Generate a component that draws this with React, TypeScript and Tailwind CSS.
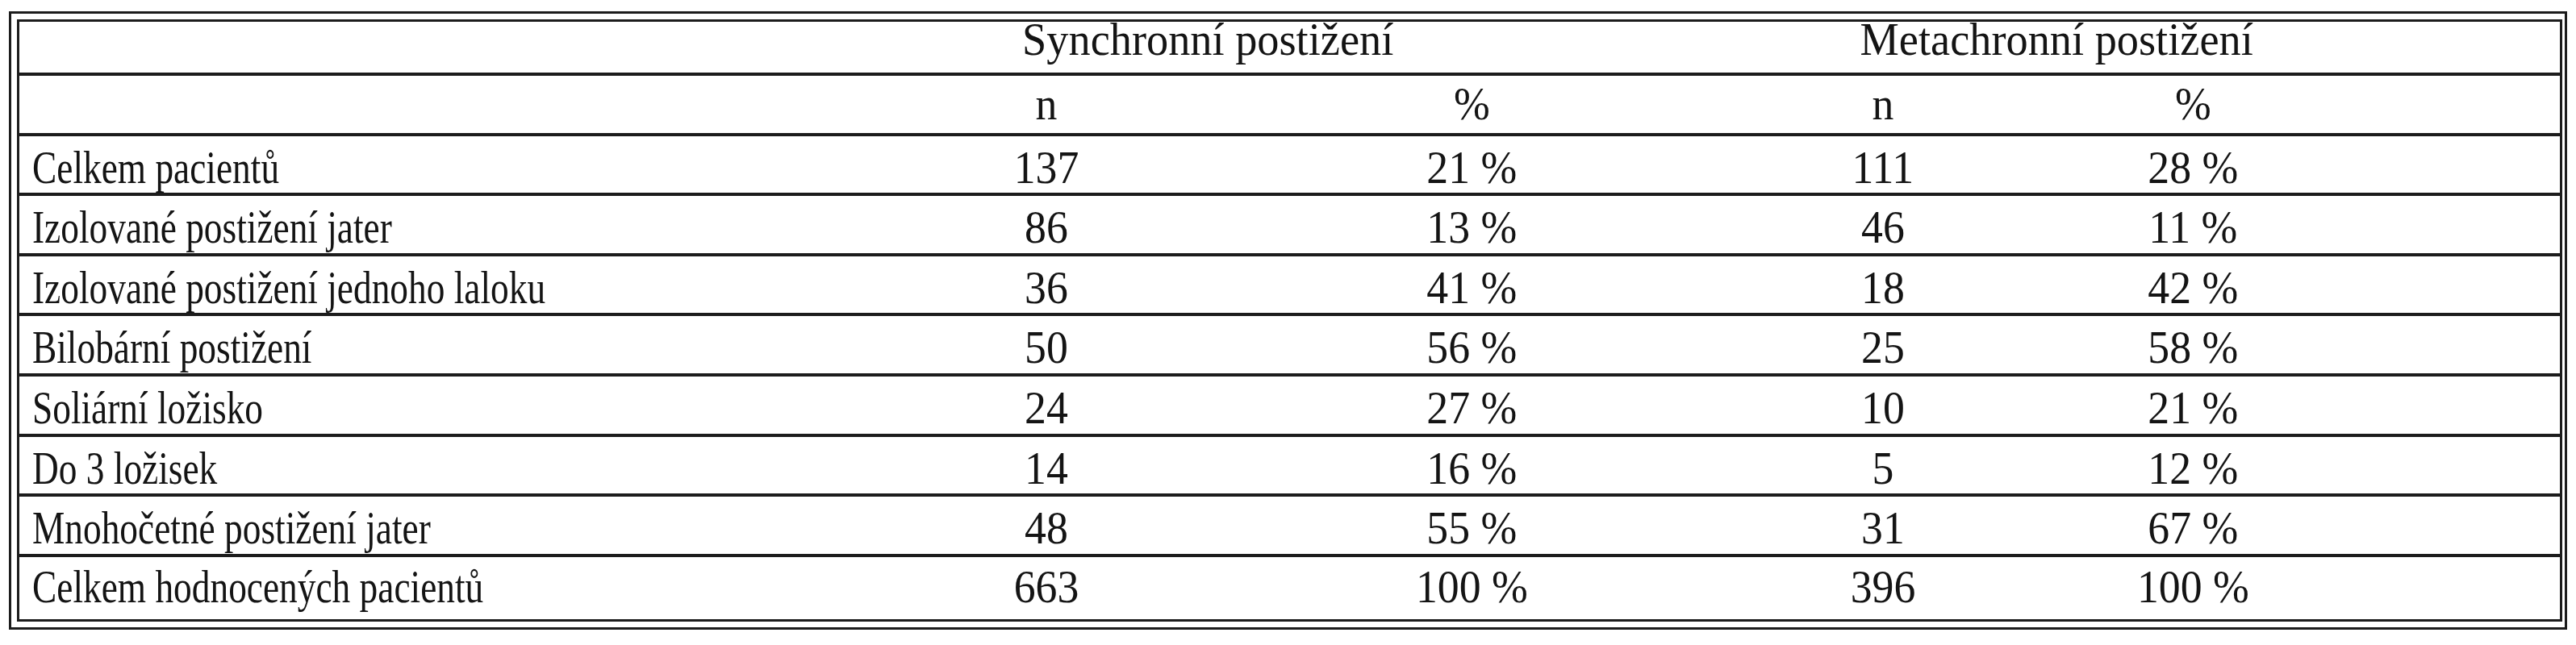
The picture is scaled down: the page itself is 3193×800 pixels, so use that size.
import React from "react";

const rows: string[][] = [
  ["Celkem pacientů", "137", "21 %", "111", "28 %"],
  ["Izolované postižení jater", "86", "13 %", "46", "11 %"],
  ["Izolované postižení jednoho laloku", "36", "41 %", "18", "42 %"],
  ["Bilobární postižení", "50", "56 %", "25", "58 %"],
  ["Soliární ložisko", "24", "27 %", "10", "21 %"],
  ["Do 3 ložisek", "14", "16 %", "5", "12 %"],
  ["Mnohočetné postižení jater", "48", "55 %", "31", "67 %"],
  ["Celkem hodnocených pacientů", "663", "100 %", "396", "100 %"],
];

function Num({ children }: { children: React.ReactNode }) {
  return (
    <div className="text-center whitespace-nowrap">
      <span className="inline-block origin-center scale-x-[0.96]">{children}</span>
    </div>
  );
}

export default function App() {
  return (
    <div className="min-h-screen bg-white font-['Liberation_Serif','Times_New_Roman',serif] text-[56px] text-[#141414]">
      <div className="ml-[11px] mt-[14px] w-[3171px] border-[3px] border-[#1c1c1c] pl-[7px] pt-[7px] pr-[3px] pb-[7px]">
        <div className="border-[3px] border-[#1c1c1c]">
          <div className="grid h-[67px] grid-cols-[946px_654px_400px_620px_148px_1fr] border-b-4 border-[#1c1c1c] leading-[44px]">
            <div />
            <div className="col-span-2 text-center whitespace-nowrap">
              <span className="inline-block origin-center scale-x-[0.97]">Synchronní postižení</span>
            </div>
            <div className="col-span-3 pr-[99px] text-center whitespace-nowrap">
              <span className="inline-block origin-center scale-x-[0.97]">Metachronní postižení</span>
            </div>
          </div>
          <div className="grid h-[74.6px] grid-cols-[946px_654px_400px_620px_148px_1fr] border-b-4 border-[#1c1c1c] pt-[13px] leading-[44px]">
            <div />
            <Num>n</Num>
            <Num>%</Num>
            <Num>n</Num>
            <Num>%</Num>
            <div />
          </div>
          {rows.map((r, i) => {
            const last = i === rows.length - 1;
            return (
              <div
                key={r[0]}
                className={
                  last
                    ? "grid h-[77.2px] grid-cols-[946px_654px_400px_620px_148px_1fr] pt-[15px] leading-[44px]"
                    : "grid h-[74.6px] grid-cols-[946px_654px_400px_620px_148px_1fr] border-b-4 border-[#1c1c1c] pt-[17px] leading-[44px]"
                }
              >
                <div className="pl-4 whitespace-nowrap">
                  <span className="inline-block origin-left scale-x-[0.81]">{r[0]}</span>
                </div>
                <Num>{r[1]}</Num>
                <Num>{r[2]}</Num>
                <Num>{r[3]}</Num>
                <Num>{r[4]}</Num>
                <div />
              </div>
            );
          })}
        </div>
      </div>
    </div>
  );
}
